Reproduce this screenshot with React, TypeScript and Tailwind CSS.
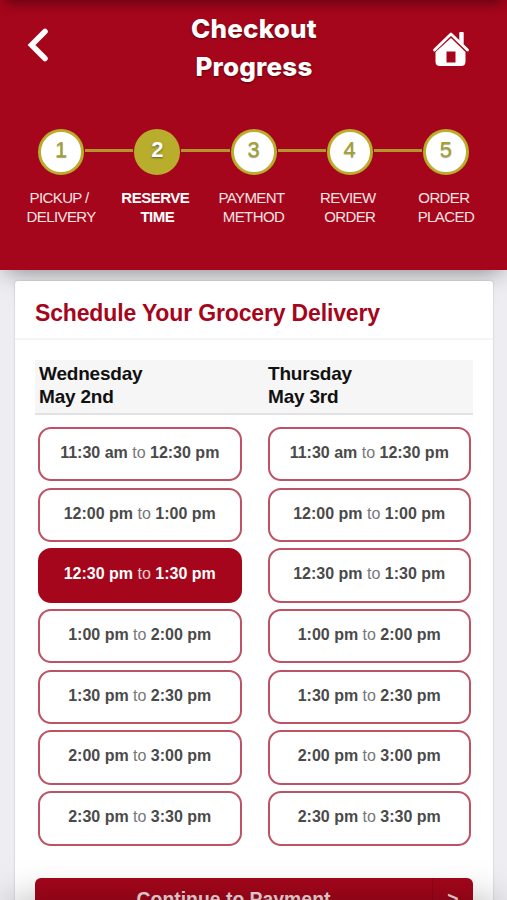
const steps = [
  { number: 1, top: "PICKUP /", bottom: "DELIVERY" },
  { number: 2, top: "RESERVE", bottom: "TIME" },
  { number: 3, top: "PAYMENT", bottom: "METHOD" },
  { number: 4, top: "REVIEW", bottom: "ORDER" },
  { number: 5, top: "ORDER", bottom: "PLACED" },
];

const slots = [
  ["11:30 am", "12:30 pm"],
  ["12:00 pm", "1:00 pm"],
  ["12:30 pm", "1:30 pm"],
  ["1:00 pm", "2:00 pm"],
  ["1:30 pm", "2:30 pm"],
  ["2:00 pm", "3:00 pm"],
  ["2:30 pm", "3:30 pm"],
];

const days = [
  { name: "Wednesday", date: "May 2nd", selected: 2 },
  { name: "Thursday", date: "May 3rd", selected: -1 },
];

function BackIcon() {
  return (
    <svg className="mt-[28px] h-[34px] w-[22px]" viewBox="0 0 22 34" fill="none" stroke="white" strokeWidth="5.5">
      <path d="M19 3.5 L5.5 17 L19 30.5" strokeLinecap="round" strokeLinejoin="miter" />
    </svg>
  );
}

function HomeIcon() {
  return (
    <svg className="mt-[31px] h-[36px] w-[38px]" viewBox="0 0 38 36">
      <path
        d="M2.5 19 L19 3 L35.5 19"
        fill="none"
        stroke="white"
        strokeWidth="2.8"
        strokeLinecap="round"
        strokeLinejoin="round"
      />
      <path d="M28 1.8 H31 V12.5 L28 9.5 Z" fill="white" stroke="white" strokeWidth="1.4" strokeLinejoin="round" />
      <path
        fillRule="evenodd"
        d="M19 7 L33.5 21 V30.5 Q33.5 35 29 35 H8 Q3.5 35 3.5 30.5 V21 Z M14.5 20.5 V31.5 H23.5 V20.5 Z"
        fill="white"
      />
    </svg>
  );
}

function Progress() {
  return (
    <div className="flex px-[13px]">
      {steps.map((step, i) => {
        const active = step.number === 2;
        return (
          <div key={step.number} className="flex flex-1 flex-col items-center">
            <div className="flex w-full items-center">
              <div className={`mb-[3px] h-[3px] flex-1 ${i > 0 ? "bg-[#b4952a]" : ""}`} />
              <div
                className={`mx-[1px] flex h-[46px] w-[46px] items-center justify-center rounded-full border-[3px] border-[#b9ad2d] pb-[5px] text-[22px] ${
                  active
                    ? "bg-[#b9ad2d] font-bold text-white [text-shadow:0_1px_2px_rgba(60,60,50,0.7)]"
                    : "bg-white text-[#a3a12c] [text-shadow:0_1px_1px_rgba(90,90,60,0.6)]"
                }`}
              >
                {step.number}
              </div>
              <div className={`mb-[3px] h-[3px] flex-1 ${i < 4 ? "bg-[#b4952a]" : ""}`} />
            </div>
            <div
              className={`mt-[13px] flex flex-col items-center whitespace-nowrap text-[15px] leading-[19px] ${
                active ? "font-bold tracking-[-0.5px] text-white" : "tracking-[-0.6px] text-[#f9e4e4]"
              }`}
            >
              <span className="pr-[4px]">{step.top}</span>
              <span>{step.bottom}</span>
            </div>
          </div>
        );
      })}
    </div>
  );
}

function App() {
  return (
    <div className="relative h-[900px] w-full overflow-hidden bg-[#eeedf2] font-['Liberation_Sans',sans-serif]">
      <header className="relative h-[270px] bg-[#a5061b] shadow-[0_6px_24px_-6px_rgba(0,0,0,0.5)]">
        <div className="flex h-[129px] justify-between pl-[26px] pr-[37px]">
          <BackIcon />
          <h1 className="ml-[28px] mt-[10px] text-center font-[Inter,sans-serif] text-[26px] font-extrabold leading-[38px] tracking-[0.2px] text-white [text-shadow:0_1px_2px_rgba(60,0,0,0.7)]">
            Checkout
            <br />
            Progress
          </h1>
          <HomeIcon />
        </div>
        <Progress />
      </header>

      <main className="relative ml-[15px] mt-[11px] h-[640px] w-[478px] rounded-[3px] bg-white shadow-[0_0_2px_rgba(0,0,0,0.25)]">
        <h2 className="h-[59px] border-b-2 border-[#f5f5f5] pl-[20px] pt-[17px] text-[23px] font-bold leading-[30px] tracking-[-0.15px] text-[#a5061b]">
          Schedule Your Grocery Delivery
        </h2>
        <div className="mx-[20px] mt-[20px] flex h-[55px] border-b-2 border-[#e2e2e2] bg-[#f6f6f6] pl-[4px] pt-[2px] text-[19px] font-bold leading-[23px] tracking-[-0.2px] text-[#111]">
          {days.map((day) => (
            <div key={day.name} className="w-[229px] shrink-0 last:w-auto">
              <div>{day.name}</div>
              <div>{day.date}</div>
            </div>
          ))}
        </div>
        <div className="ml-[23px] mt-[12px] flex gap-[26px]">
          {days.map((day) => (
            <div key={day.name} className="flex w-[203.5px] flex-col gap-[6.3px]">
              {slots.map(([from, to], i) => (
                <button
                  key={from}
                  className={`h-[54.4px] w-full whitespace-nowrap rounded-[13px] border-2 pb-[2.5px] text-[16px] ${
                    day.selected === i
                      ? "border-[#a5061b] bg-[#a5061b] text-white"
                      : "border-[#bd5265] bg-white text-[#4a4a4a]"
                  }`}
                >
                  <b>{from}</b>
                  <span className={day.selected === i ? "text-[#f4cfd3]" : "text-[#777]"}> to </span>
                  <b>{to}</b>
                </button>
              ))}
            </div>
          ))}
        </div>
        <button className="ml-[20px] mt-[32px] flex h-[52px] w-[438px] rounded-[6px] bg-[#a5061b] text-[19.4px] font-bold leading-[42px] text-[#f5dfe0]">
          <span className="h-full w-[398px] border-r border-[#8e0719]">Continue to Payment</span>
          <span className="flex-1">&gt;</span>
        </button>
      </main>

      {/* soft shadows cast by the bars above and below the viewport */}
      <div className="absolute left-[8px] right-[8px] top-[-10px] h-[10px] shadow-[0_0_12px_3px_rgba(30,0,10,0.5)]" />
      <div className="absolute left-[16px] right-[16px] top-[910px] h-[20px] shadow-[0_0_40px_5px_rgba(0,0,0,0.4)]" />
    </div>
  );
}

export default App;
